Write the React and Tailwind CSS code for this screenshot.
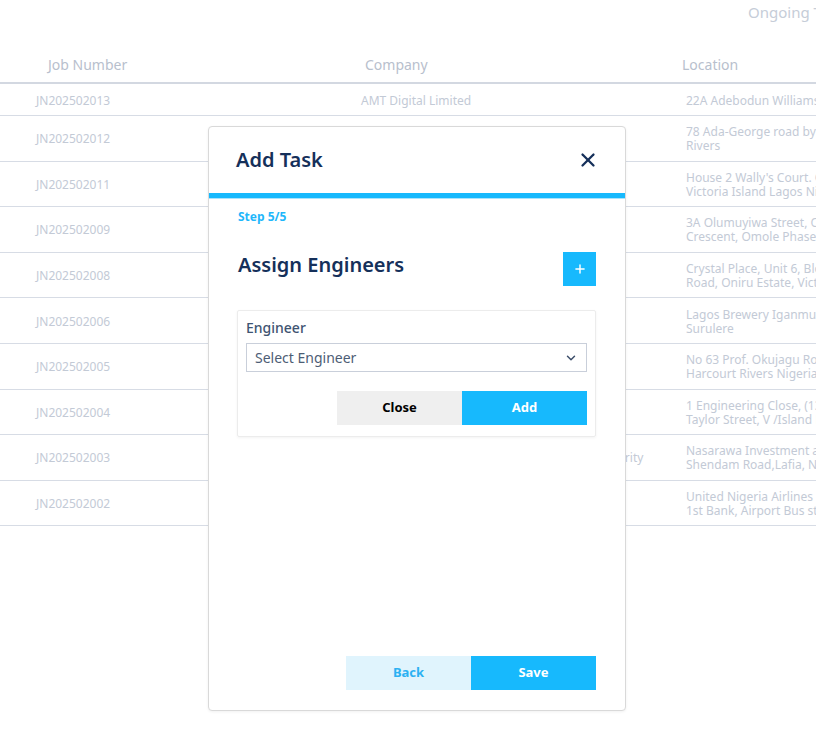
import { X, Plus, ChevronDown } from 'lucide-react'

const ROWS = [
  { job: 'JN202502013', company: 'AMT Digital Limited', loc: ['22A Adebodun Williams Street, Lekki'] },
  { job: 'JN202502012', company: '', loc: ['78 Ada-George road by Rumuokwuta', 'Rivers'] },
  { job: 'JN202502011', company: '', loc: ["House 2 Wally's Court. Off Adeola", 'Victoria Island Lagos Nigeria'] },
  { job: 'JN202502009', company: '', loc: ['3A Olumuyiwa Street, Off Isheri', 'Crescent, Omole Phase 1'] },
  { job: 'JN202502008', company: '', loc: ['Crystal Place, Unit 6, Block 4', 'Road, Oniru Estate, Victoria'] },
  { job: 'JN202502006', company: '', loc: ['Lagos Brewery Iganmu Industrial', 'Surulere'] },
  { job: 'JN202502005', company: '', loc: ['No 63 Prof. Okujagu Road, Port', 'Harcourt Rivers Nigeria'] },
  { job: 'JN202502004', company: '', loc: ['1 Engineering Close, (13 Idowu', 'Taylor Street, V /Island Lagos'] },
  { job: 'JN202502003', company: 'Nasarawa Investment and Development Authority', loc: ['Nasarawa Investment and Development', 'Shendam Road,Lafia, Nasarawa'] },
  { job: 'JN202502002', company: '', loc: ['United Nigeria Airlines Office', '1st Bank, Airport Bus stop'] },
]

function TableRow({ row, first }) {
  return (
    <div
      className={`flex items-center border-b border-[#d7dce5] text-[12px] text-[#c3cad6] whitespace-nowrap ${
        first ? 'h-[32px] pt-[2px]' : 'h-[45.6px] pt-[2px]'
      }`}
    >
      <div className="w-[361px] shrink-0 pl-[36px]">{row.job}</div>
      <div className="w-[325px] shrink-0 overflow-visible">{row.company}</div>
      <div className="flex-1 leading-[14px]">
        {row.loc.map((l) => (
          <div key={l}>{l}</div>
        ))}
      </div>
    </div>
  )
}

export default function App() {
  return (
    <div
      className="relative w-[816px] h-[750px] overflow-hidden bg-white"
      style={{ fontFamily: '"Noto Sans", "Open Sans", sans-serif' }}
    >
      {/* Background table */}
      <div className="h-[46px] pl-[748px] text-[15px] leading-[24px] text-[#c6cdd8] whitespace-nowrap">
        Ongoing Tasks
      </div>
      <div className="flex items-center h-[38px] border-b-2 border-[#d3d8e1] text-[14px] text-[#b8c0cd] whitespace-nowrap">
        <div className="w-[365px] shrink-0 pl-[48px]">Job Number</div>
        <div className="w-[317px] shrink-0">Company</div>
        <div className="flex-1">Location</div>
      </div>
      {ROWS.map((r, i) => (
        <TableRow key={r.job} row={r} first={i === 0} />
      ))}

      {/* Modal */}
      <div className="absolute left-[208px] top-[126px] w-[418px] h-[585px] flex flex-col bg-white border border-[#d9d9d9] rounded-[4px] shadow-[0_1px_3px_rgba(0,0,0,0.06)]">
        <div className="flex items-center justify-between h-[66px] pl-[27px] pr-[26px]">
          <h2 className="text-[20px] font-semibold text-[#15305a] leading-none">Add Task</h2>
          <X className="w-[22px] h-[22px] text-[#15305a]" strokeWidth={2.5} />
        </div>
        <div className="h-[5px] bg-[#17b9fd] border-b border-[#a8e4fd] box-content" />
        <div className="flex-1 flex flex-col pl-[29px] pr-[29px]">
          <p className="mt-[12px] text-[12px] font-bold text-[#1fb7fb] leading-none">Step 5/5</p>
          <div className="flex items-center justify-between mt-[29px]">
            <h3 className="text-[20px] font-semibold text-[#15305a] leading-none -mt-[8px]">Assign Engineers</h3>
            <button className="w-[33px] h-[34px] flex items-center justify-center bg-[#17b9fd] text-white">
              <Plus className="w-[14px] h-[14px]" strokeWidth={2.5} />
            </button>
          </div>

          <div className="mt-[24px] -ml-[1px] border border-[#ececec] rounded-[2px] shadow-[0_1px_3px_rgba(0,0,0,0.05)] px-[8px] pt-[8px] pb-[11px]">
            <label className="block text-[14px] font-medium text-[#3e5472] leading-[18px]">Engineer</label>
            <div className="mt-[6px] h-[29px] flex items-center justify-between border border-[#c9cfda] px-[8px]">
              <span className="text-[14px] text-[#4d5d75]">Select Engineer</span>
              <ChevronDown className="w-[14px] h-[14px] text-[#3c4e6a]" strokeWidth={2.5} />
            </div>
            <div className="flex justify-end mt-[19px]">
              <button className="w-[125px] h-[34px] bg-[#efefef] text-[13px] font-bold text-black">Close</button>
              <button className="w-[125px] h-[34px] bg-[#17b9fd] text-[13px] font-bold text-white">Add</button>
            </div>
          </div>

          <div className="flex-1" />
          <div className="flex justify-end mb-[20px]">
            <button className="w-[125px] h-[34px] bg-[#e0f4fd] text-[13px] font-bold text-[#2cb1f2]">Back</button>
            <button className="w-[125px] h-[34px] bg-[#17b9fd] text-[13px] font-bold text-white">Save</button>
          </div>
        </div>
      </div>
    </div>
  )
}
